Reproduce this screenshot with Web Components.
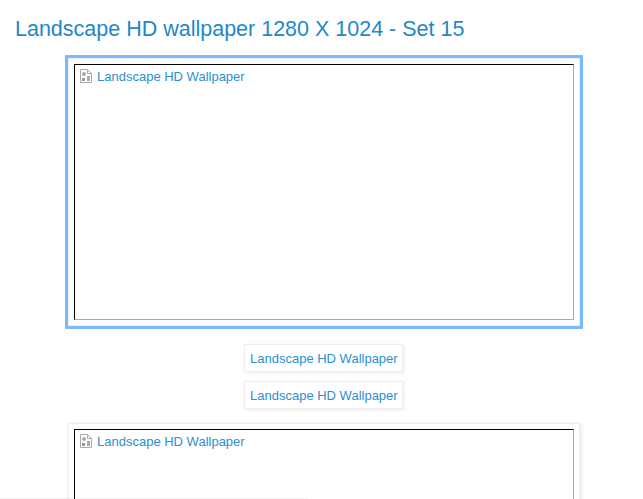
<!DOCTYPE html>
<html>
<head>
<meta charset="utf-8">
<title>Landscape HD wallpaper</title>
<style>
  html, body { margin: 0; height: 100%; overflow: hidden; background: #fff; }
  body { font-family: "Liberation Sans", Arial, sans-serif; }
</style>
</head>
<body>
<wall-page>
  <span slot="title">Landscape HD wallpaper 1280 X 1024 - Set 15</span>
  <wall-card active alt="Landscape HD Wallpaper"></wall-card>
  <wall-chip>Landscape HD Wallpaper</wall-chip>
  <wall-chip>Landscape HD Wallpaper</wall-chip>
  <wall-card alt="Landscape HD Wallpaper"></wall-card>
</wall-page>
<wall-edge></wall-edge>

<script>
class WallPage extends HTMLElement {
  constructor() {
    super();
    this.attachShadow({ mode: 'open' });
    this.shadowRoot.innerHTML = `
      <style>
        :host {
          display: block;
          padding: 0 10px 0 15px;
        }
        h1 {
          margin: 0;
          padding-top: 17px;
          height: 55px;
          font-size: 21.5px;
          line-height: 24px;
          font-weight: normal;
          color: #1e88c7;
          box-sizing: border-box;
        }
        .content {
          display: flex;
          flex-direction: column;
          align-items: center;
        }
      </style>
      <h1><slot name="title"></slot></h1>
      <div class="content"><slot></slot></div>
    `;
  }
}

class WallCard extends HTMLElement {
  constructor() {
    super();
    this.attachShadow({ mode: 'open' });
  }

  connectedCallback() {
    const alt = this.getAttribute('alt');
    this.shadowRoot.innerHTML = `
      <style>
        :host {
          display: block;
          box-sizing: border-box;
          background: #fff;
          padding: 5px;
          margin-top: 5px;
          border: 1px solid #eee;
          box-shadow: 1px 1px 5px rgba(0, 0, 0, .1);
        }
        :host([active]) {
          outline: 3px solid #7ab8ff;
          box-shadow: none;
          margin: 3px 0 18px;
        }
        .broken {
          box-sizing: border-box;
          width: 500px;
          height: 256px;
          border: 1px solid;
          border-color: #000 #aaa #aaa #000;
          padding: 3px 5px;
          display: flex;
          align-items: flex-start;
          gap: 5px;
          font-size: 13px;
          line-height: 18px;
          color: #2b90d0;
        }
        svg { flex: none; margin-top: 1px; }
      </style>
      <div class="broken">
        <svg width="12" height="14" viewBox="0 0 12 14">
          <path d="M.5.5H7.500L11.500 4.500V13.500H.5Z M7.500.5V4.500H11.500" fill="#fff" stroke="#aaa"/>
          <circle cx="4" cy="5" r="2" fill="#aaa"/>
          <rect x="2" y="9" width="3" height="3" fill="#999"/>
          <rect x="7" y="7" width="3" height="5" fill="#aaa"/>
        </svg>
        <span>${alt}</span>
      </div>
    `;
  }
}

class WallChip extends HTMLElement {
  constructor() {
    super();
    this.attachShadow({ mode: 'open' });
    this.shadowRoot.innerHTML = `
      <style>
        :host {
          display: block;
          box-sizing: border-box;
          width: 159px;
          margin: 0 1px 9px 0;
          padding: 0 5px;
          height: 28px;
          line-height: 27px;
          font-size: 13px;
          white-space: nowrap;
          color: #2b90d0;
          background: #fff;
          border: 1px solid #eee;
          box-shadow: 1px 1px 4px rgba(0, 0, 0, .08);
        }
      </style>
      <slot></slot>
    `;
  }
}

// faint edge of something docked at the bottom of the window
class WallEdge extends HTMLElement {
  constructor() {
    super();
    this.attachShadow({ mode: 'open' });
    this.shadowRoot.innerHTML = `
      <style>
        :host {
          position: fixed;
          left: 0;
          bottom: 0;
          width: 308px;
          height: 1px;
          background: rgba(0, 0, 0, .04);
        }
      </style>
    `;
  }
}

customElements.define('wall-page', WallPage);
customElements.define('wall-card', WallCard);
customElements.define('wall-chip', WallChip);
customElements.define('wall-edge', WallEdge);
</script>
</body>
</html>
